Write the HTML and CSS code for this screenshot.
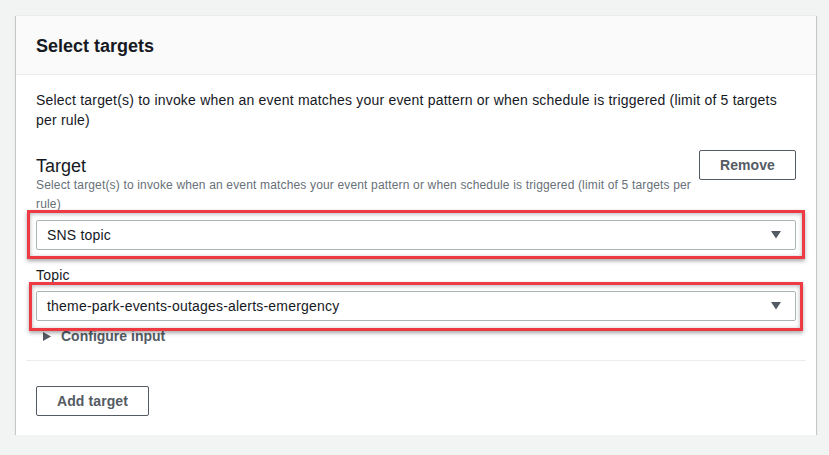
FILE: index.html
```html
<!DOCTYPE html>
<html lang="en">
<head>
  <meta charset="UTF-8">
  <meta name="viewport" content="width=device-width, initial-scale=1.0">
  <title>Select targets</title>
  <link rel="stylesheet" href="styles.css">
</head>
<body>
  <div class="card">
    <div class="card-header">
      <h2>Select targets</h2>
    </div>
    <div class="card-body">
      <p class="intro">Select target(s) to invoke when an event matches your event pattern or when schedule is triggered (limit of 5 targets per rule)</p>

      <div class="target">
        <div class="target-head">
          <div class="target-label">
            <div class="label-big">Target</div>
            <div class="hint">Select target(s) to invoke when an event matches your event pattern or when schedule is triggered (limit of 5 targets per rule)</div>
          </div>
          <button class="btn">Remove</button>
        </div>

        <div class="select marked">
          <span>SNS topic</span>
          <svg class="caret" width="10" height="8" viewBox="0 0 10 8"><path d="M0 0h10L5 7.5z" fill="#545b64"/></svg>
        </div>

        <div class="field">
          <div class="label">Topic</div>
          <div class="select marked second">
            <span>theme-park-events-outages-alerts-emergency</span>
            <svg class="caret" width="10" height="8" viewBox="0 0 10 8"><path d="M0 0h10L5 7.5z" fill="#545b64"/></svg>
          </div>
        </div>

        <div class="expander">
          <svg width="8" height="9" viewBox="0 0 8 9"><path d="M0 0l8 4.5L0 9z" fill="#545b64"/></svg>
          <span>Configure input</span>
        </div>
      </div>

      <div class="actions">
        <button class="btn">Add target</button>
      </div>
    </div>
  </div>
</body>
</html>
```

FILE: styles.css
```css
body {
  margin: 0; padding: 16px 13px 0 16px; background-color: #f2f3f3;
  font-family: "Liberation Sans", Arial, sans-serif; color: #16191f; font-size: 14px; letter-spacing: 0.2px; }
.card {
  background: white; border-top: 1px solid #eaeded; margin-top: -1px;
  box-shadow: 0 1px 1px 0 rgba(0, 28, 36, 0.3), 1px 1px 1px 0 rgba(0, 28, 36, 0.15), -1px 1px 1px 0 rgba(0, 28, 36, 0.15); }
.card-header {
  background-color: #fafafa; padding: 19px 20px 17px; border-bottom: 1px solid #eaeded; }
.card-header h2 {
  margin: 0; font-size: 18px; line-height: 22px; font-weight: 700; letter-spacing: 0; }
.card-body {
  padding: 15px 10px 19px; }
.intro {
  margin: 0; padding: 0 10px; line-height: 20px; }
.target {
  margin-top: 20px; padding: 0 10px 14px; border-bottom: 1px solid #eaeded; }
.target-head {
  display: flex; align-items: flex-start; gap: 2px; }
.target-label {
  flex: 1; padding-top: 6px; }
.label-big {
  font-size: 18px; line-height: 20px; letter-spacing: 0; }
.hint {
  font-size: 12px; line-height: 19px; color: #687078; letter-spacing: 0.16px; }
.btn {
  height: 30px; padding: 0 20px; border: 1px solid #545b64; border-radius: 2px; background: white;
  color: #545b64; font-family: inherit; font-size: 14px; font-weight: 700; letter-spacing: 0.1px; cursor: pointer; }
.select {
  position: relative; display: flex; align-items: center; justify-content: space-between;
  height: 30px; box-sizing: border-box; margin-top: 6px; padding: 0 14px 0 10px;
  border: 1px solid #aab7b8; border-radius: 2px; background: white; }
.caret {
  display: block; }
/* red annotation frames drawn over the fields */
.marked::after {
  content: ""; position: absolute; top: -11px; bottom: -10px; left: -10px; right: -10px;
  border: 3px solid #ee3b43; pointer-events: none;
  box-shadow: 0 2px 4px rgba(0, 0, 0, 0.35), inset 0 1px 4px rgba(0, 0, 0, 0.3); }
.marked.second::after {
  top: -10px; bottom: -11px; left: -8px; right: -8px; }
.field {
  margin-top: 15px; }
.label {
  line-height: 20px; }
.expander {
  display: flex; align-items: center; gap: 10px; margin-top: 5px; padding-left: 7px;
  line-height: 20px; font-weight: 700; color: #545b64; letter-spacing: 0; }
.actions {
  padding: 25px 10px 0; }
```
